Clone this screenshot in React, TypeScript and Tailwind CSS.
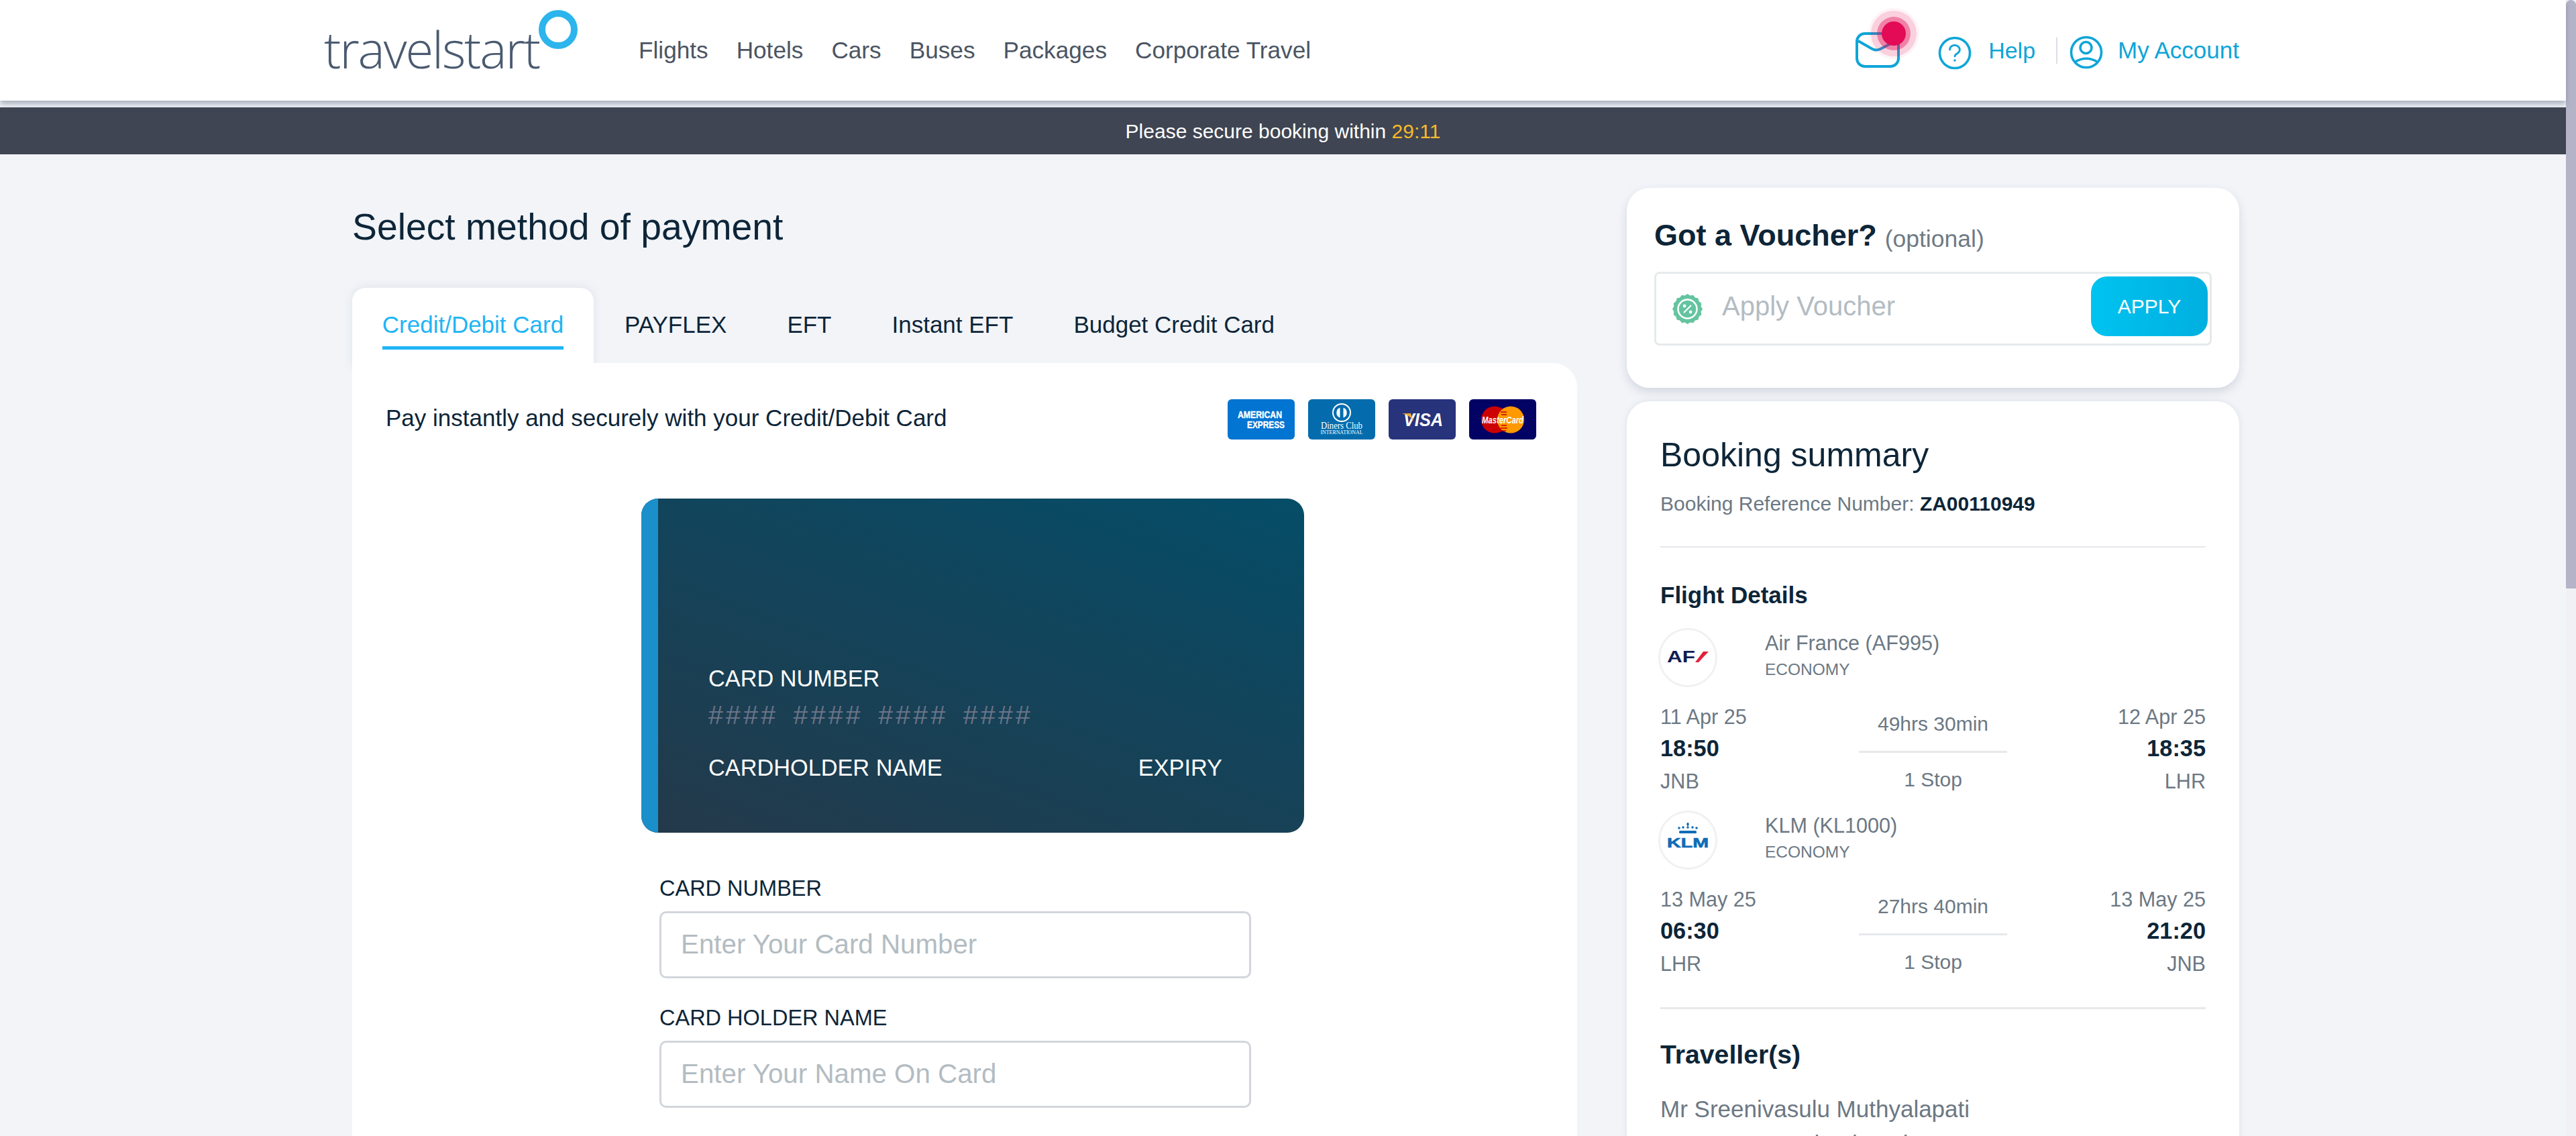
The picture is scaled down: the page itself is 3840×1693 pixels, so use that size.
import React from "react";

const F = "font-['Liberation_Sans',Arial,sans-serif]";

function Logo() {
  return (
    <div className="flex items-start w-[380px] h-[150px] relative">
      <span className="absolute left-[-3px] top-[31px] text-[76px] leading-[84px] text-[#4a5a70] font-['Open_Sans',sans-serif] font-light tracking-[-2.2px]">travelstart</span>
      <svg className="absolute left-[317px] top-[15px]" width="58" height="58" viewBox="0 0 58 58">
        <circle cx="29" cy="29" r="24" fill="none" stroke="#2bb5ec" strokeWidth="10" />
      </svg>
    </div>
  );
}

function MailBadge() {
  return (
    <div className="relative w-[66px] h-[60px]">
      <svg className="absolute left-0 top-[3px]" width="66" height="53" viewBox="0 0 66 53" fill="none" stroke="#0ea5d8" strokeWidth="4">
        <rect x="2" y="2" width="62" height="49" rx="12" />
        <path d="M4 13 L25 25 Q31 28 37 25 L60 13" strokeLinejoin="round" />
      </svg>
      <span className="absolute left-[19px] top-[-33px] w-[76px] h-[76px] rounded-full bg-[#e30b56]/5" />
      <span className="absolute left-[23px] top-[-29px] w-[68px] h-[68px] rounded-full bg-[#e30b56]/15" />
      <span className="absolute left-[32px] top-[-20px] w-[50px] h-[50px] rounded-full bg-[#e30b56]/40" />
      <span className="absolute left-[39px] top-[-13px] w-[36px] h-[36px] rounded-full bg-[#e30b56]" />
    </div>
  );
}

function HelpIcon() {
  return (
    <svg width="50" height="50" viewBox="0 0 50 50" fill="none" stroke="#0ea5d8" strokeWidth="3.6">
      <circle cx="25" cy="25" r="22.5" />
      <path d="M17.5 20 a7.4 6.6 0 1 1 11.5 5.5 q-4 2.2 -4 4.5" strokeWidth="2.8" strokeLinecap="round" />
      <circle cx="25" cy="36" r="1.8" fill="#0ea5d8" stroke="none" />
    </svg>
  );
}

function AccountIcon() {
  return (
    <svg width="50" height="50" viewBox="0 0 50 50" fill="none" stroke="#0ea5d8" strokeWidth="3.6">
      <circle cx="25" cy="25" r="22.5" />
      <circle cx="24.5" cy="18" r="8.5" />
      <path d="M8 39.5 Q25 29 42 39.5" />
    </svg>
  );
}

function AmexLogo() {
  return (
    <svg width="100" height="60" viewBox="0 0 100 60" className="rounded-[6px] bg-[#0274d1]">
      <text x="15" y="28" fontFamily="Liberation Sans" fontWeight="700" fontSize="14.5" textLength="66" lengthAdjust="spacingAndGlyphs" fill="#fff" stroke="#fff" strokeWidth="0.4">AMERICAN</text>
      <text x="29" y="43" fontFamily="Liberation Sans" fontWeight="700" fontSize="14.5" textLength="56" lengthAdjust="spacingAndGlyphs" fill="#fff" stroke="#fff" strokeWidth="0.4">EXPRESS</text>
    </svg>
  );
}
function DinersLogo() {
  return (
    <svg width="100" height="60" viewBox="0 0 100 60" className="rounded-[6px] bg-[#046cad]">
      <circle cx="50" cy="20" r="13" fill="none" stroke="#fff" strokeWidth="2" />
      <path d="M47.5 12.5 a8 8 0 0 0 0 15 Z M52.5 12.5 a8 8 0 0 1 0 15 Z" fill="#fff" />
      <text x="50" y="44" textAnchor="middle" fontFamily="Liberation Serif" fontSize="15" textLength="62" lengthAdjust="spacingAndGlyphs" fill="#fff">Diners Club</text>
      <text x="50" y="52" textAnchor="middle" fontFamily="Liberation Serif" fontSize="7.5" textLength="63" lengthAdjust="spacingAndGlyphs" fill="#fff">INTERNATIONAL</text>
    </svg>
  );
}
function VisaLogo() {
  return (
    <svg width="100" height="60" viewBox="0 0 100 60" className="rounded-[6px] bg-[#27337b]">
      <text x="22" y="40" fontFamily="Liberation Sans" fontWeight="700" fontStyle="italic" fontSize="27" textLength="59" lengthAdjust="spacingAndGlyphs" fill="#fff">VISA</text>
      <path d="M20 21 L33 21 L37 33 Q32 24 20 21 Z" fill="#e8a63a" />
    </svg>
  );
}
function McLogo() {
  return (
    <svg width="100" height="60" viewBox="0 0 100 60" className="rounded-[6px] bg-[#010263]">
      <circle cx="38" cy="30.5" r="20" fill="#cc0000" />
      <circle cx="62" cy="30.5" r="20" fill="#ff9900" />
      <path d="M48 39 h8 M47 43 h10 M48 47 h7 M47 19 h9 M48 23 h8" stroke="#cc0000" strokeWidth="1.6" />
      <text x="50" y="36" textAnchor="middle" fontFamily="Liberation Sans" fontWeight="700" fontStyle="italic" fontSize="15" textLength="62" lengthAdjust="spacingAndGlyphs" fill="#fff">MasterCard</text>
    </svg>
  );
}

function VoucherIcon() {
  const pts: string[] = [];
  for (let i = 0; i < 32; i++) {
    const a = (i / 32) * Math.PI * 2;
    const r = i % 2 === 0 ? 22.5 : 20.5;
    pts.push(`${(22.5 + r * Math.cos(a)).toFixed(2)},${(22.5 + r * Math.sin(a)).toFixed(2)}`);
  }
  return (
    <svg width="45" height="45" viewBox="0 0 45 45" className="shrink-0">
      <polygon points={pts.join(" ")} fill="#64c4a0" />
      <circle cx="22.5" cy="22.5" r="14" fill="none" stroke="#fff" strokeWidth="2.5" />
      <path d="M17 28 L28 17" stroke="#fff" strokeWidth="2.2" />
      <circle cx="18" cy="18" r="2.4" fill="#fff" />
      <circle cx="27" cy="27" r="2.4" fill="#fff" />
    </svg>
  );
}

function AfLogo() {
  return (
    <svg width="62" height="18" viewBox="0 0 62 18" className="overflow-visible -mt-[2px]">
      <text x="0" y="17" fontFamily="Liberation Sans" fontWeight="700" fontSize="23" textLength="42" lengthAdjust="spacingAndGlyphs" fill="#101b52">AF</text>
      <path d="M42 17 L54 1 L62 1 L47 17 Z" fill="#e2213a" />
    </svg>
  );
}
function KlmLogo() {
  return (
    <svg width="64" height="38" viewBox="0 0 64 38" className="-mt-[14px]">
      <g fill="#0f6cb6">
        <circle cx="19" cy="8" r="1.8" /><circle cx="25" cy="7" r="1.8" /><circle cx="32" cy="7" r="1.8" /><circle cx="39" cy="7" r="1.8" /><circle cx="45" cy="8" r="1.8" />
        <rect x="31" y="0" width="2" height="5" />
        <rect x="30" y="1.5" width="4" height="1.5" />
        <rect x="19" y="12" width="26" height="4" rx="1.5" />
      </g>
      <text x="32" y="37" textAnchor="middle" fontFamily="Liberation Sans" fontWeight="700" fontSize="19.5" textLength="62" lengthAdjust="spacingAndGlyphs" fill="#0f6cb6" stroke="#0f6cb6" strokeWidth="0.6">KLM</text>
    </svg>
  );
}

function Flight(p: { logo: React.ReactNode; name: string; d1: string; t1: string; a1: string; dur: string; d2: string; t2: string; a2: string }) {
  return (
    <div className="flex flex-col">
      <div className="flex items-start h-[88px]">
        <div className="ml-[-3px] w-[88px] h-[88px] rounded-full border-[3px] border-[#f1f1f1] flex items-center justify-center">{p.logo}</div>
        <div className="ml-[71px] flex flex-col">
          <span className="text-[30.6px] leading-[44px] text-[#6c7883]">{p.name}</span>
          <span className="text-[24.5px] leading-[36px] text-[#6c7883]">ECONOMY</span>
        </div>
      </div>
      <div className="flex justify-between mt-[22px] h-[150px]">
        <div className="flex flex-col w-[200px]">
          <span className="text-[30.6px] leading-[44px] text-[#6c7883]">{p.d1}</span>
          <span className="text-[34.3px] leading-[50px] font-bold text-[#0d2538]">{p.t1}</span>
          <span className="text-[30.6px] leading-[48px] text-[#6c7883]">{p.a1}</span>
        </div>
        <div className="flex flex-col items-center w-[221px] pt-[11px]">
          <span className="text-[30px] leading-[44px] text-[#6c7883]">{p.dur}</span>
          <div className="w-full h-[3px] bg-[#e6e8eb] mt-[18px]" />
          <span className="text-[30px] leading-[44px] text-[#6c7883] mt-[18px]">1 Stop</span>
        </div>
        <div className="flex flex-col items-end w-[200px]">
          <span className="text-[30.6px] leading-[44px] text-[#6c7883]">{p.d2}</span>
          <span className="text-[34.3px] leading-[50px] font-bold text-[#0d2538]">{p.t2}</span>
          <span className="text-[30.6px] leading-[48px] text-[#6c7883]">{p.a2}</span>
        </div>
      </div>
    </div>
  );
}

function Field(p: { label: string; ph: string }) {
  return (
    <div className="flex flex-col">
      <label className="text-[32.5px] leading-[40px] text-[#0d2538]">{p.label}</label>
      <div className="mt-[14px] h-[100px] rounded-[10px] border-[3px] border-[#d2d6db] bg-white flex items-center pl-[29px] text-[40.3px] text-[#b3bcc2]">{p.ph}</div>
    </div>
  );
}

export default function App() {
  return (
    <div className={`${F} flex w-[3840px] h-[1693px] overflow-hidden bg-[#f2f4f8]`}>
      <div className="w-[3825px] flex flex-col">
        <header className="relative z-10 h-[150px] bg-white shadow-[0_5px_8px_rgba(120,130,150,0.6)] shrink-0 flex items-start pl-[486px]">
          <Logo />
          <nav className="flex items-center h-[150px] gap-[42px] ml-[86px] text-[35.2px] text-[#4b5563]">
            <span>Flights</span>
            <span>Hotels</span>
            <span>Cars</span>
            <span>Buses</span>
            <span>Packages</span>
            <span>Corporate Travel</span>
          </nav>
          <div className="ml-auto mr-[487px] flex items-center h-[150px] text-[35px] text-[#0ea5d8]">
            <MailBadge />
            <div className="ml-[57px] mt-[7px]"><HelpIcon /></div>
            <span className="ml-[25px] text-[34px]">Help</span>
            <span className="ml-[31px] w-[2px] h-[39px] bg-[#dcdfe3]" />
            <div className="ml-[18px] mt-[5px]"><AccountIcon /></div>
            <span className="ml-[22px]">My Account</span>
          </div>
        </header>
        <div className="mt-[10px] h-[70px] shrink-0 bg-[#3f4552] flex items-center justify-center text-[30px] text-white">
          <span>Please secure booking within <span className="text-[#f6b92b]">29:11</span></span>
        </div>
        <main className="flex items-start pl-[525px] pt-[50px]">
          <section className="w-[1826px] flex flex-col">
            <h1 className="text-[55.3px] leading-[64px] text-[#0d2538] mt-[26px] font-normal">Select method of payment</h1>
            <div className="flex mt-[59px] h-[112px] text-[35px] text-[#0d2538]">
              <div className="relative z-10 w-[360px] h-[120px] rounded-t-[20px] bg-white shadow-[0_-2px_14px_rgba(150,160,180,0.18)] flex flex-col items-center pt-[35px]">
                <span className="leading-[40px] text-[#1fb4f5] border-b-[5px] border-[#1fb4f5] pb-[12px]">Credit/Debit Card</span>
              </div>
              <div className="flex items-start pt-[35px] ml-[46px] gap-[90px] leading-[40px]">
                <span>PAYFLEX</span>
                <span>EFT</span>
                <span>Instant EFT</span>
                <span>Budget Credit Card</span>
              </div>
            </div>
            <div className="relative z-20 bg-white rounded-tr-[36px] h-[1152px] flex flex-col">
              <div className="flex items-center justify-between h-[60px] mt-[54px] pl-[50px] pr-[61px]">
                <span className="-mt-[3px] text-[35px] text-[#0d2538]">Pay instantly and securely with your Credit/Debit Card</span>
                <div className="flex gap-[20px]">
                  <AmexLogo />
                  <DinersLogo />
                  <VisaLogo />
                  <McLogo />
                </div>
              </div>
              <div className="ml-[431px] mt-[88px] w-[988px] h-[498px] rounded-[25px] overflow-hidden flex bg-[linear-gradient(200deg,#054d68,#24394a)] text-white text-[34.3px]">
                <div className="w-[25px] bg-[#1a8fc9] shrink-0" />
                <div className="flex-1 flex flex-col pl-[75px] pr-[122px] pt-[248px]">
                  <span className="leading-[40px]">CARD NUMBER</span>
                  <span className="leading-[40px] mt-[15px] text-[#6b7488] text-[39.2px] tracking-[4.3px] [word-spacing:7px]">#### #### #### ####</span>
                  <div className="flex justify-between mt-[38px] leading-[40px]">
                    <span>CARDHOLDER NAME</span>
                    <span>EXPIRY</span>
                  </div>
                </div>
              </div>
              <div className="ml-[458px] w-[882px] flex flex-col gap-[39px] mt-[63px]">
                <Field label="CARD NUMBER" ph="Enter Your Card Number" />
                <Field label="CARD HOLDER NAME" ph="Enter Your Name On Card" />
              </div>
            </div>
          </section>
          <aside className="ml-[74px] w-[913px] flex flex-col gap-[20px]">
            <div className="h-[298px] rounded-[34px] bg-white shadow-[0_6px_14px_rgba(140,150,170,0.3)] px-[41px] pt-[44px]">
              <div className="flex items-baseline h-[54px]">
                <span className="text-[45px] leading-[54px] font-bold text-[#0d2538]">Got a Voucher?</span>
                <span className="ml-[12px] translate-y-[2px] text-[35.5px] text-[#6f7a84]">(optional)</span>
              </div>
              <div className="mt-[27px] h-[110px] rounded-[8px] border-[3px] border-[#e6eaec] flex items-center pl-[24px] pr-[3px]">
                <VoucherIcon />
                <span className="ml-[29px] -mt-[9px] text-[40px] text-[#b3bcc2]">Apply Voucher</span>
                <div className="ml-auto -mt-[7px] w-[174px] h-[89px] rounded-[24px] bg-[linear-gradient(90deg,#00c3f0,#00afe0)] flex items-center justify-center text-[30px] text-white">APPLY</div>
              </div>
            </div>
            <div className="h-[1100px] rounded-t-[34px] bg-white shadow-[0_0_10px_rgba(140,150,170,0.2)] px-[50px] pt-[50px]">
              <h2 className="text-[50px] leading-[60px] font-normal text-[#0d2538]">Booking summary</h2>
              <p className="mt-[23px] h-[40px] leading-[40px] text-[30px] text-[#6c7883]">Booking Reference Number: <b className="text-[#0d2538]">ZA00110949</b></p>
              <div className="mt-[43px] h-[2px] bg-[#e6e8eb]" />
              <h3 className="mt-[51px] text-[35px] leading-[40px] font-bold text-[#0d2538]">Flight Details</h3>
              <div className="mt-[29px] flex flex-col gap-[12px]">
                <Flight logo={<AfLogo />} name="Air France (AF995)" d1="11 Apr 25" t1="18:50" a1="JNB" dur="49hrs 30min" d2="12 Apr 25" t2="18:35" a2="LHR" />
                <Flight logo={<KlmLogo />} name="KLM (KL1000)" d1="13 May 25" t1="06:30" a1="LHR" dur="27hrs 40min" d2="13 May 25" t2="21:20" a2="JNB" />
              </div>
              <div className="mt-[33px] h-[3px] bg-[#e6e8eb]" />
              <h3 className="mt-[45px] text-[39.2px] leading-[46px] font-bold text-[#0d2538]">Traveller(s)</h3>
              <p className="mt-[33px] text-[35px] leading-[50px] text-[#6c7883]">Mr Sreenivasulu Muthyalapati</p>
              <p className="mt-[2px] text-[35px] leading-[50px] text-[#6c7883]">Mr Sravan Muthyalapati</p>
            </div>
          </aside>
        </main>
      </div>
      <div className="w-[15px] h-[1693px] shrink-0 bg-[#f1f1f5]">
        <div className="h-[877px] w-full rounded-t-[8px] bg-[#b5b3c8]" />
      </div>
    </div>
  );
}
